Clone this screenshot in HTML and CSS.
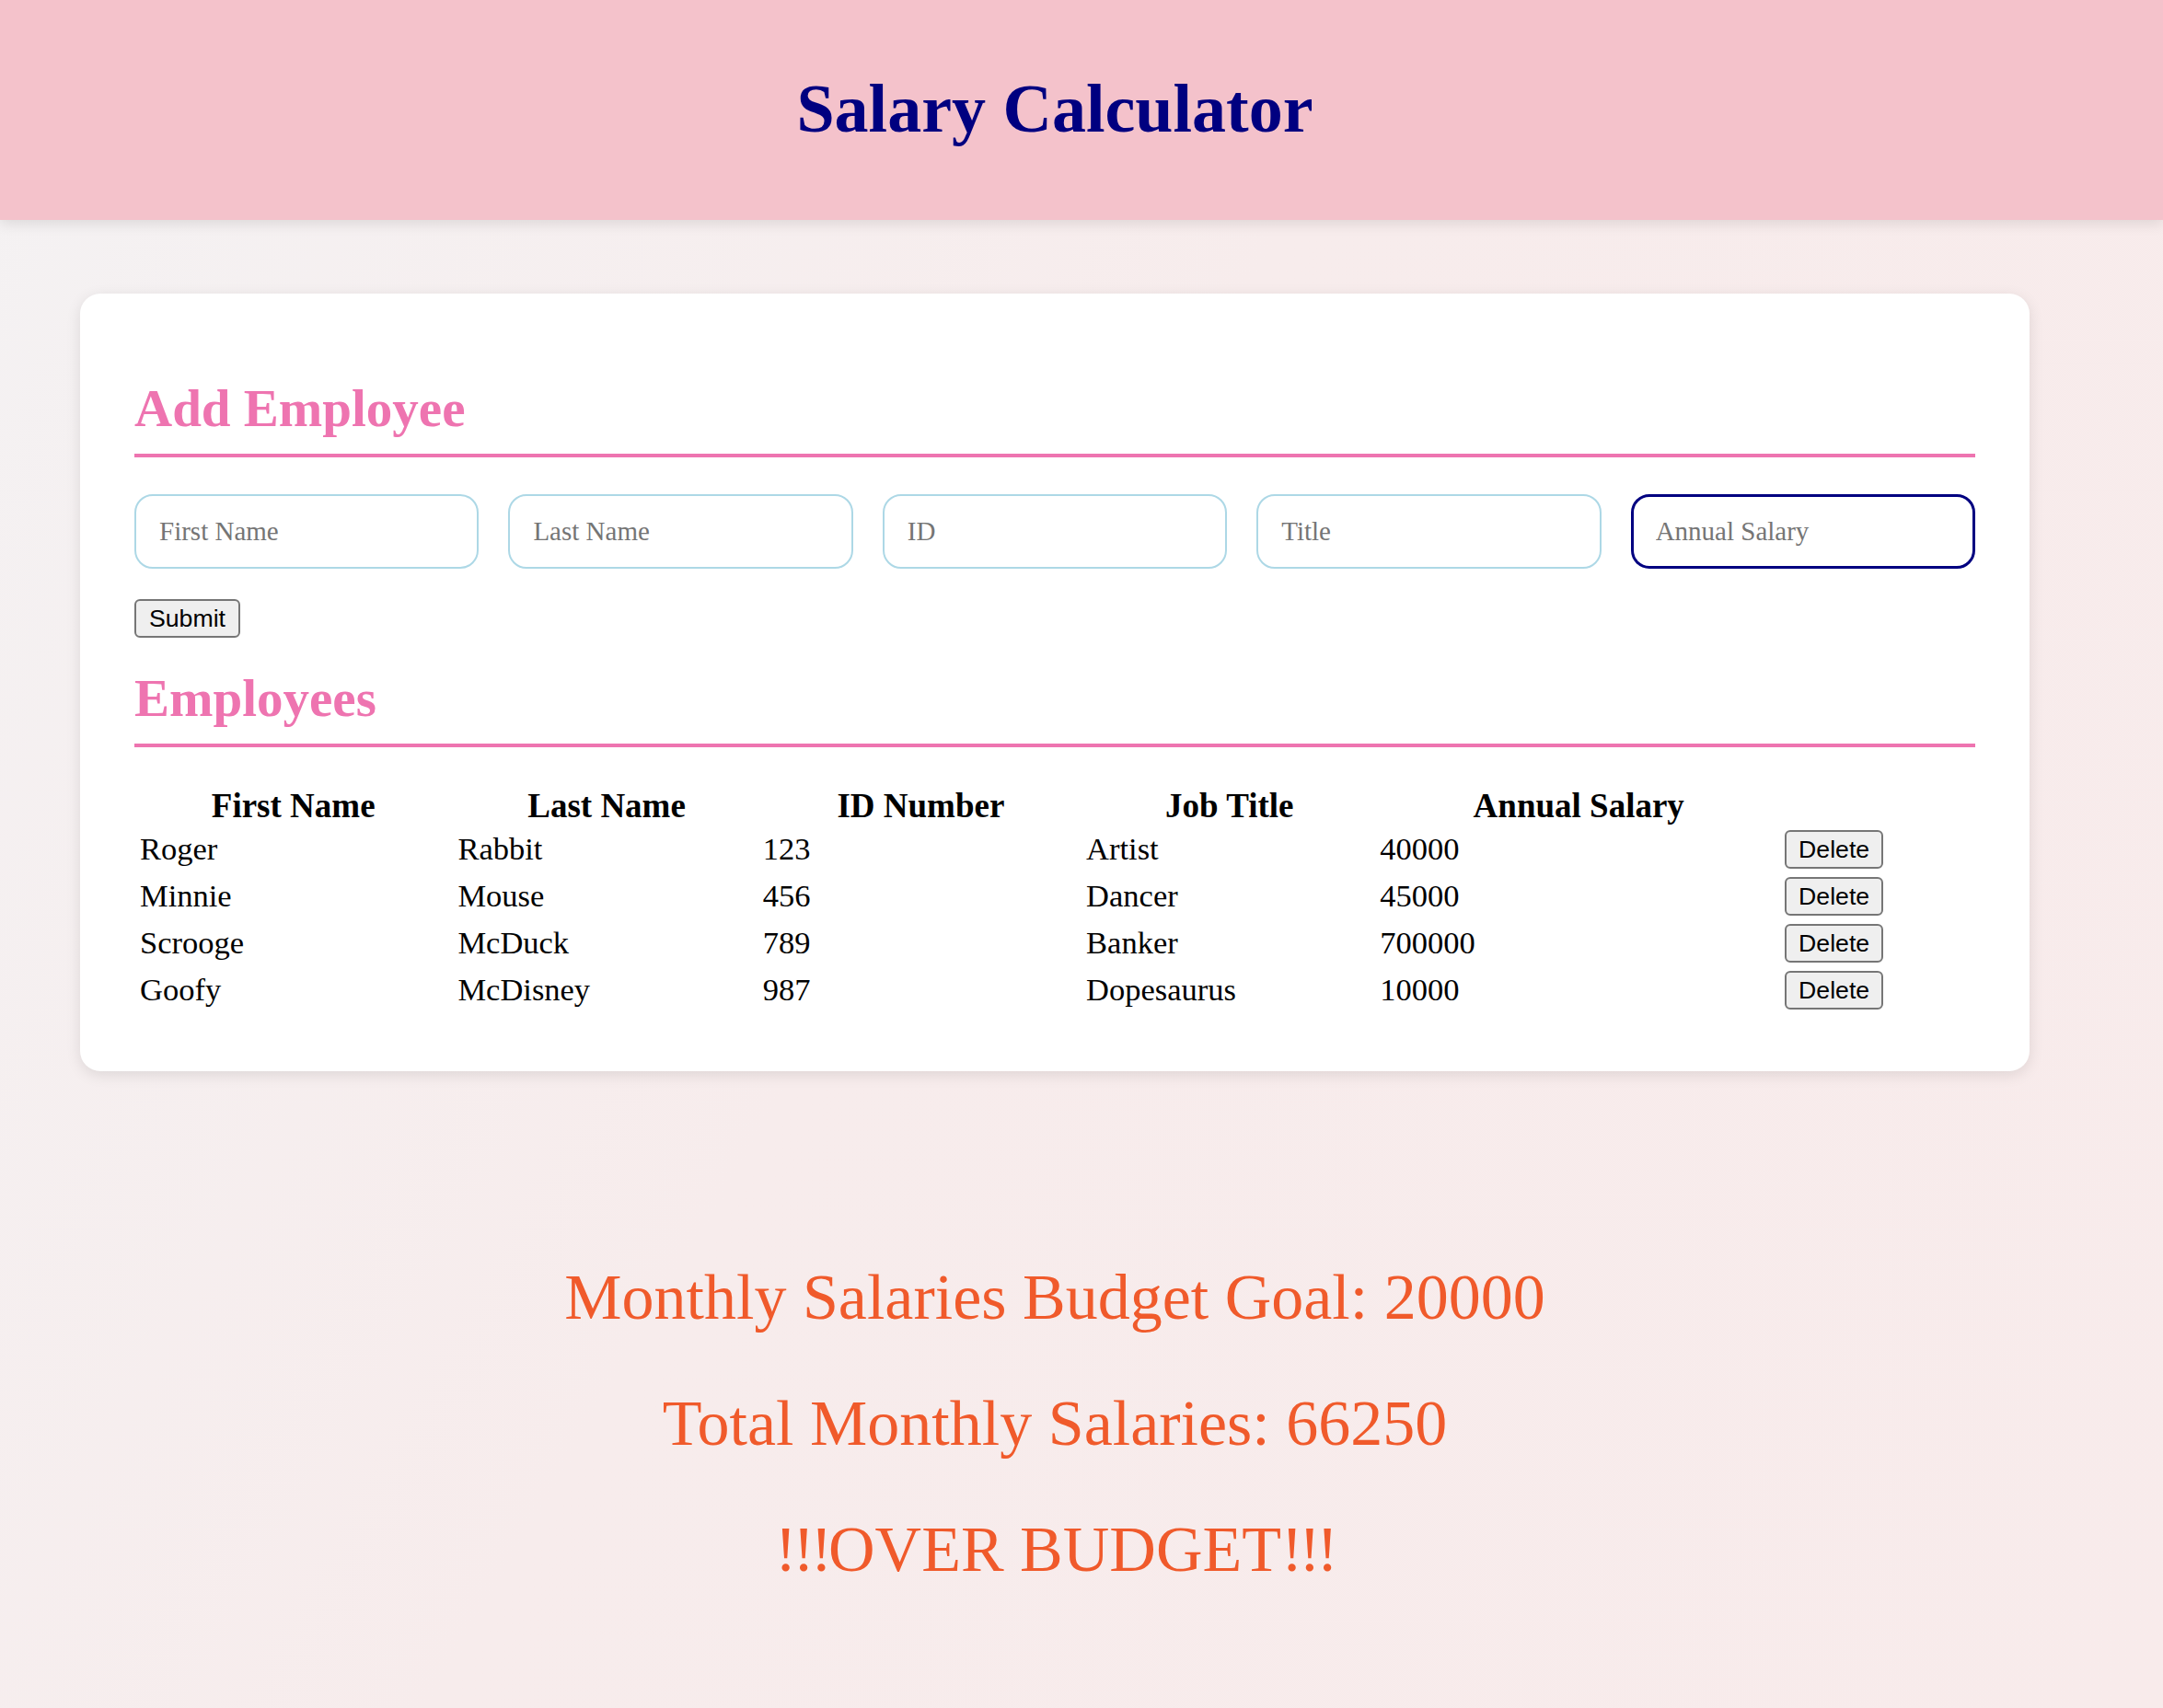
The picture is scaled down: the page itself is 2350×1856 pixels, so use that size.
FILE: index.html
```html
<!DOCTYPE html>
<html lang="en">
<head>
<meta charset="utf-8">
<title>Salary Calculator</title>
<link rel="stylesheet" href="styles.css">
</head>
<body>
<header class="site-header">
  <div class="header-inner">
    <h1 class="title">Salary Calculator</h1>
  </div>
</header>
<main class="main">
  <section class="card">
    <h2 class="section-title first">Add Employee</h2>
    <form class="employee-form">
      <div class="input-row">
        <input class="field" type="text" placeholder="First Name">
        <input class="field" type="text" placeholder="Last Name">
        <input class="field" type="text" placeholder="ID">
        <input class="field" type="text" placeholder="Title">
        <input class="field field-focus" type="text" placeholder="Annual Salary">
      </div>
      <button class="btn" type="button">Submit</button>
    </form>
    <h2 class="section-title list-title">Employees</h2>
    <table class="emp-table">
      <colgroup>
        <col class="c1"><col class="c2"><col class="c3"><col class="c4"><col class="c5"><col class="c6">
      </colgroup>
      <thead>
        <tr><th>First Name</th><th>Last Name</th><th>ID Number</th><th>Job Title</th><th>Annual Salary</th><th></th></tr>
      </thead>
      <tbody>
        <tr><td>Roger</td><td>Rabbit</td><td>123</td><td>Artist</td><td>40000</td><td><button class="btn btn-row" type="button">Delete</button></td></tr>
        <tr><td>Minnie</td><td>Mouse</td><td>456</td><td>Dancer</td><td>45000</td><td><button class="btn btn-row" type="button">Delete</button></td></tr>
        <tr><td>Scrooge</td><td>McDuck</td><td>789</td><td>Banker</td><td>700000</td><td><button class="btn btn-row" type="button">Delete</button></td></tr>
        <tr><td>Goofy</td><td>McDisney</td><td>987</td><td>Dopesaurus</td><td>10000</td><td><button class="btn btn-row" type="button">Delete</button></td></tr>
      </tbody>
    </table>
  </section>
  <section class="totals">
    <p class="total-line">Monthly Salaries Budget Goal: 20000</p>
    <p class="total-line">Total Monthly Salaries: 66250</p>
    <p class="total-line"><span class="bang">!!!</span>OVER BUDGET<span class="bang">!!!</span></p>
  </section>
</main>
</body>
</html>
```
FILE: styles.css
```css
html {
  min-height: 100%;
  background: linear-gradient(120deg, #f4f2f3 0%, #f7ecec 45%, #f8ebeb 100%);
}
body {
  margin: 0;
  font-family: "Liberation Serif", "Times New Roman", serif;
  color: #000;
}
.site-header {
  background: #f4c2cb;
  height: 239px;
  box-shadow: 0 4px 14px rgba(0, 0, 0, 0.10);
  position: relative;
}
.header-inner {
  padding: 77px 145px 0 87px;
  text-align: center;
}
.title {
  margin: 0;
  font-size: 74px;
  line-height: 82px;
  font-weight: bold;
  color: #000080;
}
.main {
  margin: 80px 145px 0 87px;
}
.card {
  background: #fff;
  border-radius: 22px;
  box-shadow: 0 4px 16px rgba(0, 0, 0, 0.10);
  padding: 60px 59px 65px 59px;
}
.section-title {
  margin: 35px 0 40px;
  font-size: 57px;
  line-height: 62px;
  font-weight: bold;
  color: #ee74b0;
  padding-bottom: 18px;
  border-bottom: 4px solid #ee74b0;
}
.section-title.first {
  margin-top: 34px;
}
.section-title.list-title {
  margin-bottom: 44px;
}
.input-row {
  display: flex;
  gap: 32px;
}
.field {
  flex: 1 1 0;
  min-width: 0;
  height: 81px;
  box-sizing: border-box;
  border: 2px solid #add8e6;
  border-radius: 20px;
  padding: 0 25px;
  font-family: "Liberation Serif", "Times New Roman", serif;
  font-size: 29px;
  background: #fff;
  outline: none;
}
.field::placeholder {
  color: #757575;
}
.field-focus {
  border: 3px solid #000080;
  padding: 0 24px;
}
.btn {
  display: inline-block;
  height: 42px;
  box-sizing: border-box;
  padding: 0 14px;
  border: 2px solid #767676;
  border-radius: 6px;
  background: #efefef;
  font-family: "Liberation Sans", Arial, sans-serif;
  font-size: 26.67px;
  line-height: 38px;
  color: #000;
  vertical-align: middle;
}
.employee-form .btn {
  margin-top: 33px;
}
.emp-table {
  table-layout: fixed;
  border-collapse: separate;
  border-spacing: 4px;
  margin: -4px 0 -4px -4px;
  width: calc(100% + 8px);
}
.c1 { width: 344px; }
.c2 { width: 326px; }
.c3 { width: 346px; }
.c4 { width: 314px; }
.c5 { width: 434px; }
.c6 { width: 208px; }
.emp-table th {
  padding: 2px;
  font-size: 37px;
  line-height: 35px;
  font-weight: bold;
  text-align: center;
}
.emp-table td {
  padding: 2px;
  font-size: 34.5px;
  line-height: 43px;
  text-align: left;
  vertical-align: middle;
}
.emp-table td:first-child {
  padding-left: 6px;
}
.btn-row {
  display: block;
  padding: 0 13px;
}
.totals {
  margin-top: 206px;
  text-align: center;
  display: flex;
  flex-direction: column;
  gap: 57px;
  padding-bottom: 60px;
}
.total-line {
  margin: 0;
  font-size: 70px;
  line-height: 80px;
  color: #f05a2b;
}
.bang {
  letter-spacing: -4px;
}
```
